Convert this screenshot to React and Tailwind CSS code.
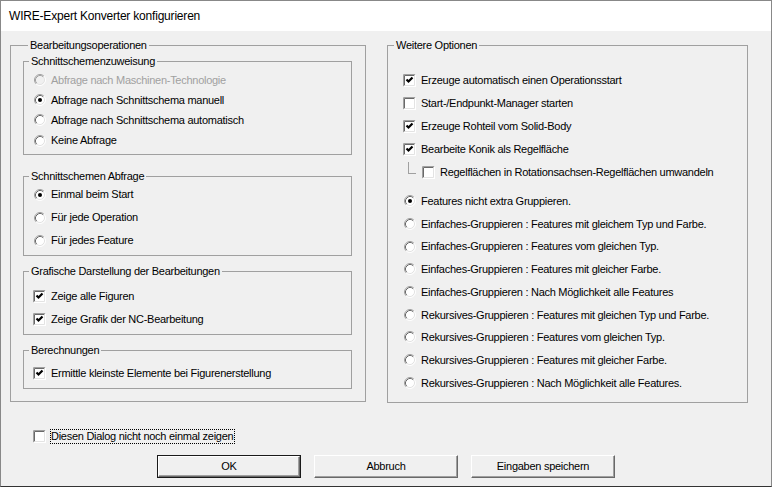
import React from 'react'

const Radio = ({ checked, disabled }) => (
    <svg width="12" height="12" viewBox="0 0 12 12" className="shrink-0">
        <circle cx="6" cy="6" r="5" fill={disabled ? '#f0f0f0' : '#ffffff'} />
        <path d="M2.11 9.89A5.5 5.5 0 0 1 9.89 2.11" fill="none" stroke="#a0a0a0" />
        <path d="M9.89 2.11A5.5 5.5 0 0 1 2.11 9.89" fill="none" stroke="#ffffff" />
        <path d="M2.82 9.18A4.5 4.5 0 0 1 9.18 2.82" fill="none" stroke={disabled ? '#a0a0a0' : '#696969'} />
        <path d="M9.18 2.82A4.5 4.5 0 0 1 2.82 9.18" fill="none" stroke="#e3e3e3" />
        {checked && <circle cx="6" cy="6" r="2" fill="#000000" />}
    </svg>
)

const Check = ({ checked }) => (
    <svg width="13" height="13" viewBox="0 0 13 13" className="shrink-0">
        <rect x="0" y="0" width="13" height="13" fill="#ffffff" />
        <path d="M0.5 12.5V0.5H12.5" fill="none" stroke="#a0a0a0" />
        <path d="M0.5 12.5H12.5V0.5" fill="none" stroke="#ffffff" />
        <path d="M1.5 11.5V1.5H11.5" fill="none" stroke="#696969" />
        <path d="M1.5 11.5H11.5V1.5" fill="none" stroke="#e3e3e3" />
        {checked && <polyline points="3.5,5.5 5.5,7.5 9.5,3.5" fill="none" stroke="#000000" strokeWidth="2.2" />}
    </svg>
)

const Group = ({ title, className = '', legendClass = 'ml-[5px]', children }) => (
    <fieldset className={`border border-[#a0a0a0] ${className}`}>
        <legend className={`px-[2px] leading-[13px] ${legendClass}`}>{title}</legend>
        {children}
    </fieldset>
)

const Option = ({ type, checked, disabled, label, className = '' }) => (
    <div className={`flex items-center gap-[5px] ${className}`}>
        {type === 'radio' ? <Radio checked={checked} disabled={disabled} /> : <Check checked={checked} />}
        <span className={disabled ? 'text-[#a0a0a0]' : ''}>{label}</span>
    </div>
)

const Button = ({ children, isDefault }) => (
    <div className={`w-[144px] h-[23px] ${isDefault ? 'border border-[#1a1a1a]' : ''}`}>
        <div className="h-full flex items-center justify-center bg-[#f0f0f0] border border-t-white border-l-white border-b-[#696969] border-r-[#696969] shadow-[inset_-1px_-1px_0_#a0a0a0]">
            {children}
        </div>
    </div>
)

const grouping = [
    'Einfaches-Gruppieren : Features mit gleichem Typ und Farbe.',
    'Einfaches-Gruppieren : Features vom gleichen Typ.',
    'Einfaches-Gruppieren : Features mit gleicher Farbe.',
    'Einfaches-Gruppieren : Nach Möglichkeit alle Features',
    'Rekursives-Gruppieren : Features mit gleichen Typ und Farbe.',
    'Rekursives-Gruppieren : Features vom gleichen Typ.',
    'Rekursives-Gruppieren : Features mit gleicher Farbe.',
    'Rekursives-Gruppieren : Nach Möglichkeit alle Features.',
]

export default function App() {
    return (
        <div className="w-[772px] h-[487px] flex flex-col border border-[#888888] border-b-[#333333] bg-[#f0f0f0] text-black text-[11px] tracking-[-0.27px] font-['Liberation_Sans',Arial,sans-serif]">
            {/* Title bar */}
            <div className="h-[30px] shrink-0 bg-white flex items-center pl-[8px] text-[12px] tracking-[-0.2px]">
                WIRE-Expert Konverter konfigurieren
            </div>

            <div className="flex items-start pt-[8px] pl-[9px] gap-[21px]">
                {/* Left column */}
                <Group title="Bearbeitungsoperationen" className="w-[356px] h-[363px] pl-[12px] pr-[13px]" legendClass="ml-[5px]">
                    <Group title="Schnittschemenzuweisung" className="mt-[3px] pb-[3px]" legendClass="ml-[5px]">
                        <div className="pl-[10px] pt-[2px]">
                            <Option type="radio" disabled label="Abfrage nach Maschinen-Technologie" className="h-[20px]" />
                            <Option type="radio" checked label="Abfrage nach Schnittschema manuell" className="h-[20px]" />
                            <Option type="radio" label="Abfrage nach Schnittschema automatisch" className="h-[20px]" />
                            <Option type="radio" label="Keine Abfrage" className="h-[21px]" />
                        </div>
                    </Group>

                    <Group title="Schnittschemen Abfrage" className="mt-[15px] pb-[3px]" legendClass="ml-[5px]">
                        <div className="pl-[10px]">
                            <Option type="radio" checked label="Einmal beim Start" className="h-[23px]" />
                            <Option type="radio" label="Für jede Operation" className="h-[23px]" />
                            <Option type="radio" label="Für jedes Feature" className="h-[23px]" />
                        </div>
                    </Group>

                    <Group title="Grafische Darstellung der Bearbeitungen" className="mt-[9px] pb-[3px]" legendClass="ml-[5px]">
                        <div className="pl-[9px] pt-[7px]">
                            <Option type="check" checked label="Zeige alle Figuren" className="h-[23px]" />
                            <Option type="check" checked label="Zeige Grafik der NC-Bearbeitung" className="h-[23px]" />
                        </div>
                    </Group>

                    <Group title="Berechnungen" className="mt-[9px] pb-[3px]" legendClass="ml-[5px]">
                        <div className="pl-[9px] pt-[5px]">
                            <Option type="check" checked label="Ermittle kleinste Elemente bei Figurenerstellung" className="h-[23px]" />
                        </div>
                    </Group>
                </Group>

                {/* Right column */}
                <Group title="Weitere Optionen" className="w-[361px] h-[364px]" legendClass="ml-[6px]">
                    <div className="pl-[15px] pt-[17px]">
                        <Option type="check" checked label="Erzeuge automatisch einen Operationsstart" className="h-[23px]" />
                        <Option type="check" label="Start-/Endpunkt-Manager starten" className="h-[23px]" />
                        <Option type="check" checked label="Erzeuge Rohteil vom Solid-Body" className="h-[23px]" />
                        <Option type="check" checked label="Bearbeite Konik als Regelfläche" className="h-[23px]" />
                        <div className="flex items-center h-[23px]">
                            <div className="self-start mt-[1px] ml-[5px] w-[8px] h-[12px] border-l border-b border-[#a0a0a0]" />
                            <Option type="check" label="Regelflächen in Rotationsachsen-Regelflächen umwandeln" className="ml-[6px]" />
                        </div>
                    </div>
                    <div className="pl-[16px] pt-[6px]">
                        <Option type="radio" checked label="Features nicht extra Gruppieren." className="h-[22.7px]" />
                        {grouping.map((label) => (
                            <Option key={label} type="radio" label={label} className="h-[22.7px]" />
                        ))}
                    </div>
                </Group>
            </div>

            {/* Footer */}
            <div className="flex items-center h-[15px] mt-[26px] pl-[32px] gap-[4px]">
                <Check />
                <span className="border border-dotted border-black leading-[13px] pr-px">
                    Diesen Dialog nicht noch einmal zeigen
                </span>
            </div>

            <div className="flex gap-[13px] mt-[11px] pl-[156px]">
                <Button isDefault>OK</Button>
                <Button>Abbruch</Button>
                <Button>Eingaben speichern</Button>
            </div>
        </div>
    )
}
